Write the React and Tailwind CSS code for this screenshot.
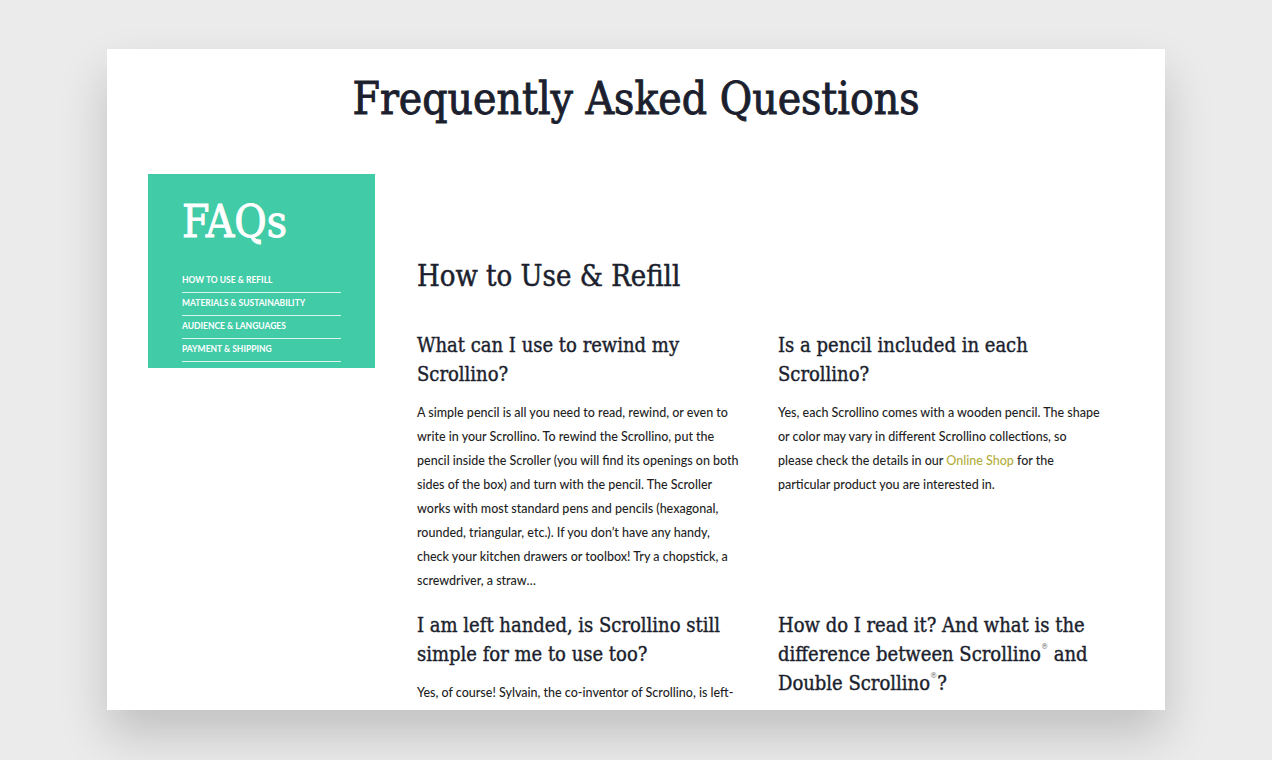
export default function App() {
  const serif = { fontFamily: '"DejaVu Serif Condensed", "DejaVu Serif", serif' };
  return (
    <div className="min-h-screen bg-[#ebebeb] pt-[49px]">
      <div className="mx-auto w-[1058px] h-[661px] bg-white overflow-hidden shadow-[0_25px_45px_rgba(0,0,0,0.18)]">
        <h1 style={serif} className="pt-[22px] text-center text-[44px] leading-[56px] text-[#1c1f2e] font-normal [-webkit-text-stroke:0.9px_#1c1f2e]">Frequently Asked Questions</h1>
        <div className="flex pl-[41px] pt-[47px]">
          <aside className="w-[227px] h-[194px] shrink-0 bg-[#41cba7] pl-[34px] pt-[22px]">
            <div style={serif} className="text-white text-[44px] leading-[52px] [-webkit-text-stroke:0.9px_#ffffff]">FAQs</div>
            <ul className="mt-[25px] w-[159px] font-['Lato'] text-[8.5px] font-bold uppercase text-white leading-[13px]">
              <li className="border-b border-white/80 pb-[5px] pt-[1px]">How to use &amp; refill</li>
              <li className="border-b border-white/80 pb-[5px] pt-[4px]">Materials &amp; sustainability</li>
              <li className="border-b border-white/80 pb-[5px] pt-[4px]">Audience &amp; languages</li>
              <li className="border-b border-white/80 pb-[5px] pt-[4px]">Payment &amp; shipping</li>
            </ul>
          </aside>
          <main className="ml-[42px] pt-[82px]">
            <h2 style={serif} className="text-[29px] leading-[40px] text-[#1c1f2e] [-webkit-text-stroke:0.5px_#1c1f2e]">How to Use &amp; Refill</h2>
            <div className="mt-[35px] grid grid-cols-[330px_330px] gap-x-[31px]">
              <div>
                <h3 style={serif} className="text-[20px] leading-[29px] text-[#1c1f2e] [-webkit-text-stroke:0.4px_#1c1f2e]">What can I use to rewind my<br />Scrollino?</h3>
                <p className="mt-[12px] font-['Lato'] font-medium text-[12.5px] leading-[24px] text-[#1f1f1f]">
                  A simple pencil is all you need to read, rewind, or even to<br />
                  write in your Scrollino. To rewind the Scrollino, put the<br />
                  pencil inside the Scroller (you will find its openings on both<br />
                  sides of the box) and turn with the pencil. The Scroller<br />
                  works with most standard pens and pencils (hexagonal,<br />
                  rounded, triangular, etc.). If you don’t have any handy,<br />
                  check your kitchen drawers or toolbox! Try a chopstick, a<br />
                  screwdriver, a straw…
                </p>
              </div>
              <div>
                <h3 style={serif} className="text-[20px] leading-[29px] text-[#1c1f2e] [-webkit-text-stroke:0.4px_#1c1f2e]">Is a pencil included in each<br />Scrollino?</h3>
                <p className="mt-[12px] font-['Lato'] font-medium text-[12.5px] leading-[24px] text-[#1f1f1f]">
                  Yes, each Scrollino comes with a wooden pencil. The shape<br />
                  or color may vary in different Scrollino collections, so<br />
                  please check the details in our <span className="text-[#b3ae3c]">Online Shop</span> for the<br />
                  particular product you are interested in.
                </p>
              </div>
              <div className="mt-[18px]">
                <h3 style={serif} className="text-[20px] leading-[29px] text-[#1c1f2e] [-webkit-text-stroke:0.4px_#1c1f2e]">I am left handed, is Scrollino still<br />simple for me to use too?</h3>
                <p className="mt-[12px] font-['Lato'] font-medium text-[12.5px] leading-[24px] text-[#1f1f1f]">
                  Yes, of course! Sylvain, the co-inventor of Scrollino, is left-
                </p>
              </div>
              <div className="mt-[18px]">
                <h3 style={serif} className="text-[20px] leading-[29px] text-[#1c1f2e] [-webkit-text-stroke:0.4px_#1c1f2e]">
                  How do I read it? And what is the<br />
                  difference between Scrollino<sup className="text-[8px] align-super [-webkit-text-stroke:0px] text-[#555]">®</sup> and<br />
                  Double Scrollino<sup className="text-[8px] align-super [-webkit-text-stroke:0px] text-[#555]">®</sup>?
                </h3>
              </div>
            </div>
          </main>
        </div>
      </div>
    </div>
  );
}
